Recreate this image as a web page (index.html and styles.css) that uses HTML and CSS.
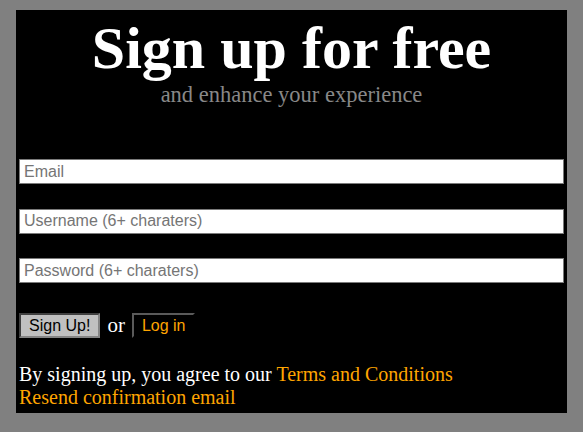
FILE: index.html
```html
<!DOCTYPE html>
<html lang="en">
<head>
<meta charset="utf-8">
<title>Sign up for free</title>
<link rel="stylesheet" href="styles.css">
</head>
<body>
<div class="card">
  <h1 class="title">Sign up for free</h1>
  <p class="subtitle">and enhance your experience</p>
  <form class="form">
    <input class="field" type="text" placeholder="Email">
    <input class="field" type="text" placeholder="Username (6+ charaters)">
    <input class="field" type="password" placeholder="Password (6+ charaters)">
    <div class="actions">
      <button class="btn btn-signup" type="button">Sign Up!</button>
      <span class="or">or</span>
      <button class="btn btn-login" type="button">Log in</button>
    </div>
  </form>
  <p class="terms">By signing up, you agree to our <a class="link" href="#">Terms and Conditions</a><br><a class="link" href="#">Resend confirmation email</a></p>
</div>
</body>
</html>
```
FILE: styles.css
```css
html, body {
  margin: 0;
  background: #808080;
}
body {
  padding: 10px 16px 20px;
  font-family: "Liberation Serif", "Times New Roman", serif;
}
.card {
  background: #000;
  padding: 5px 3px 4px;
  color: #fff;
}
.title {
  margin: 0;
  font-size: 60px;
  line-height: 66px;
  font-weight: bold;
  text-align: center;
  color: #fff;
}
.subtitle {
  margin: 1px 0 0;
  font-size: 22.5px;
  line-height: 25px;
  text-align: center;
  color: #888;
}
.form {
  display: flex;
  flex-direction: column;
  margin-top: 52px;
}
.field {
  box-sizing: border-box;
  width: 100%;
  height: 25px;
  margin: 0 0 24.5px;
  padding: 0 4px;
  border: 1px solid #7a7a7a;
  border-radius: 0;
  background: #fff;
  font-family: "Liberation Sans", Arial, sans-serif;
  font-size: 16px;
  color: #000;
}
.field::placeholder {
  color: #757575;
}
.field:last-of-type {
  margin-bottom: 30px;
}
.actions {
  display: flex;
  align-items: center;
  gap: 7px;
}
.btn {
  box-sizing: border-box;
  height: 25px;
  padding: 0 8px;
  border-width: 2px;
  border-style: solid;
  border-radius: 0;
  font-family: "Liberation Sans", Arial, sans-serif;
  font-size: 16px;
  line-height: 19px;
}
.btn-signup {
  background: #c0c0c0;
  color: #000;
  border-color: #404040 #858585 #858585 #404040;
}
.btn-login {
  background: #000;
  color: #ffa500;
  border-color: #5a5a5a #000 #000 #5a5a5a;
}
.or {
  font-size: 21px;
  line-height: 23px;
  color: #fff;
}
.terms {
  margin: 25px 0 0;
  font-size: 20px;
  line-height: 23px;
  color: #fff;
}
.link {
  color: #ffa500;
  text-decoration: none;
}
```
